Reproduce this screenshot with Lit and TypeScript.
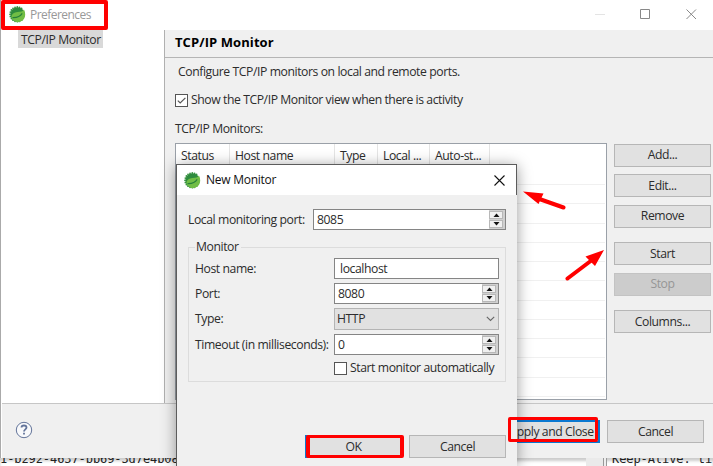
import { LitElement, html, css, svg } from "lit";
import { customElement, property } from "lit/decorators.js";

const baseText = css`
  :host {
    font-family: "Open Sans", "Noto Sans", sans-serif;
    font-size: 12.2px;
    line-height: 18px;
    letter-spacing: -0.42px;
    color: #2c2c2c;
    white-space: nowrap;
  }
  * { box-sizing: border-box; }
`;

@customElement("spring-icon")
class SpringIcon extends LitElement {
  static styles = css`:host { display: block; width: 17px; height: 17px; } svg { display: block; }`;
  render() {
    const teeth = Array.from({ length: 20 }, (_, i) => (i * 18 * Math.PI) / 180);
    return html`<svg width="17" height="17" viewBox="0 0 17 17">
      ${teeth.filter((a) => Math.cos(a) < 0.75).map((a) => svg`<circle cx=${8.3 + 7.3 * Math.cos(a)} cy=${8.3 + 7.3 * Math.sin(a)} r="0.9" fill="#3a9442"/>`)}
      <circle cx="8.5" cy="8.5" r="7.2" fill="#2e8b3d"/>
      <path d="M15 3.4C13.8 5.4 11.6 5.6 8.5 6C4.6 6.5 1.9 8.3 2.6 12C5 15.8 8.3 17 11.5 15.6C16.6 13.4 17.2 8 15 3.4Z" fill="#70bd45"/>
      <path d="M3.5 11.6C7.4 11.8 11.2 10.6 13.2 7.4" fill="none" stroke="#26803a" stroke-width="1.1"/>
    </svg>`;
  }
}

@customElement("push-button")
class PushButton extends LitElement {
  @property() label = "";
  static styles = [baseText, css`
    :host { display: flex; align-items: center; justify-content: center; box-sizing: border-box;
      width: 97px; height: 23px; border: 1px solid #b6b6b6; background: #e1e1e1; }
    :host([disabled]) { background: #ccc; border-color: #c3c3c3; color: #969696; }
    :host([primary]) { border: 2px solid #0b78d1; }
  `];
  render() { return html`<span>${this.label}</span>`; }
}

@customElement("check-box")
class CheckBox extends LitElement {
  @property({ type: Boolean }) checked = false;
  @property() label = "";
  static styles = [baseText, css`
    :host { display: flex; align-items: center; gap: 3px; height: 18px; }
    .box { width: 13px; height: 13px; border: 1px solid #555; background: #fff; }
    svg { display: block; }
  `];
  render() {
    return html`<span class="box"><svg width="11" height="11" viewBox="0 0 11 11">
      ${this.checked ? svg`<path d="M1.8 5.6L4.2 8L9.4 2.8" fill="none" stroke="#555" stroke-width="1.2"/>` : ""}
    </svg></span><span>${this.label}</span>`;
  }
}

@customElement("spin-field")
class SpinField extends LitElement {
  @property() value = "";
  static styles = [baseText, css`
    :host { display: flex; justify-content: space-between; box-sizing: border-box; height: 21px;
      border: 1px solid #858585; background: #fff; padding-left: 3px; }
    .value { line-height: 20px; }
    .arrows { display: flex; flex-direction: column; width: 16px; background: #d0d0d0; padding: 1px 1px 0 0; gap: 1px; }
    .arrow { display: flex; align-items: center; justify-content: center; width: 14px; height: 8px; border: 1px solid #b8b8b8; background: #f0f0f0; }
    svg { display: block; }
  `];
  render() {
    return html`<span class="value">${this.value}</span><span class="arrows">
      <span class="arrow"><svg width="7" height="4" viewBox="0 0 7 4"><path d="M0.5 4L3.5 0.5L6.5 4Z" fill="#111"/></svg></span>
      <span class="arrow"><svg width="7" height="4" viewBox="0 0 7 4"><path d="M0.5 0L3.5 3.5L6.5 0Z" fill="#111"/></svg></span>
    </span>`;
  }
}

@customElement("monitor-dialog")
class MonitorDialog extends LitElement {
  static styles = [baseText, css`
    :host { display: flex; flex-direction: column; width: 341px; height: 302px; }
    .titlebar { display: flex; align-items: center; height: 31px; width: 341px; flex: none; background: #fff;
      border: 1px solid #5c5c5c; border-bottom: 0; padding: 0 11px 0 7px; }
    .title { font-size: 12px; color: #111; margin-left: 5px; flex: 1; letter-spacing: -0.25px; }
    .content { flex: 1; background: #f0f0f0; border-left: 1px solid #5c5c5c; padding: 14px 11px 0 11px; display: flex; flex-direction: column; }
    .row { display: flex; align-items: center; justify-content: space-between; height: 21px; line-height: 21px; flex: none; }
    .port { width: 193px; }
    fieldset { margin: 8px 0 0; border: 1px solid #dcdcdc; padding: 0 5px 0 6px; min-width: 0; height: 144px; flex: none; }
    legend { padding: 0 2px 0 1px; height: 18px; }
    .grid { display: grid; grid-template-columns: 139px 165px; grid-template-rows: 21px 21px 22px 21px 18px; row-gap: 4px; padding-top: 2px; align-items: center; line-height: 20px; }
    .field { height: 21px; border: 1px solid #858585; background: #fff; padding-left: 5px; line-height: 20px; }
    .select { display: flex; align-items: center; justify-content: space-between; height: 22px; border: 1px solid #b4b4b4; background: #e1e1e1; padding: 0 3px 0 2px; }
    .check { grid-column: 2; }
    .actions { display: flex; justify-content: flex-end; gap: 7px; margin-top: 53px; }
  `];
  render() {
    return html`
      <div class="titlebar"><spring-icon></spring-icon><span class="title">New Monitor</span>
        <svg width="11" height="11" viewBox="0 0 11 11"><path d="M0.5 0.5L10.5 10.5M10.5 0.5L0.5 10.5" stroke="#111" stroke-width="1.1"/></svg>
      </div>
      <div class="content">
        <div class="row"><span>Local monitoring port:</span><spin-field class="port" value="8085"></spin-field></div>
        <fieldset><legend>Monitor</legend>
          <div class="grid">
            <span>Host name:</span><span class="field">localhost</span>
            <span>Port:</span><spin-field value="8080"></spin-field>
            <span>Type:</span><span class="select">HTTP
              <svg width="9" height="6" viewBox="0 0 9 6"><path d="M0.8 0.8L4.5 4.5L8.2 0.8" fill="none" stroke="#666" stroke-width="1.1"/></svg></span>
            <span>Timeout (in milliseconds):</span><spin-field value="0"></spin-field>
            <check-box class="check" label="Start monitor automatically"></check-box>
          </div>
        </fieldset>
        <div class="actions"><push-button primary label="OK"></push-button><push-button label="Cancel"></push-button></div>
      </div>`;
  }
}

@customElement("app-root")
class AppRoot extends LitElement {
  static styles = [baseText, css`
    :host { display: block; position: relative; width: 713px; height: 466px; overflow: hidden; background: #fff; }
    .window { display: flex; flex-direction: column; height: 458px; border-left: 1px solid #aaa; background: #fff; padding-left: 1px; }
    .titlebar { display: flex; align-items: center; height: 29px; padding: 0 16px 0 7px; flex: none; margin-bottom: 1px; }
    .title { flex: 1; margin-left: 4px; font-size: 12px; color: #999; letter-spacing: -0.55px; }
    .body { display: flex; height: 374px; flex: none; border-bottom: 1px solid #c6c6c6; }
    .tree { width: 163px; border-right: 1px solid #b0b0b0; padding-left: 16px; }
    .selected { display: inline-block; width: 85px; height: 18px; background: #d9d9d9; padding-left: 3px; line-height: 19px; }
    .page { flex: 1; background: #f0f0f0; display: flex; flex-direction: column; }
    .heading { height: 28px; border-bottom: 1px solid #b5b5b5; padding: 3px 0 0 10px; font-weight: 700; font-size: 13px; color: #000; letter-spacing: 0.08px; }
    .desc { margin: 5px 0 0 13px; }
    .show { margin: 10px 0 0 10px; }
    .caption { margin: 11px 0 0 10px; }
    .main { display: flex; gap: 7px; margin: 5px 0 0 10px; }
    .table { width: 432px; height: 257px; border: 1px solid #9aa0a8; background: #fff; }
    .head { display: grid; grid-template-columns: 54px 105px 43px 52px 60px; height: 24px; line-height: 24px; }
    .col { border-right: 1px solid #e5e5e5; padding-left: 5px; }
    .line { height: 19.25px; border-bottom: 1px solid #f0f0f0; margin-right: 1px; }
    .line.first { height: 17px; }
    .buttons { display: flex; flex-direction: column; gap: 7.5px; padding-top: 0.5px; }
    .gap { margin-top: 7px; }
    .footer { flex: 1; background: #f0f0f0; display: flex; justify-content: space-between; padding: 16px 9px 0 13px; }
    .help { margin-top: 1px; }
    .actions { display: flex; gap: 7px; }
    .apply { width: 97px; }
    .console { display: grid; grid-template-columns: 586px 17px 4px 1fr; height: 8px; overflow: hidden;
      font-family: "DejaVu Sans Mono", monospace; font-size: 12px; letter-spacing: -0.08px; line-height: 14px; color: #222; box-shadow: inset 0 3px 3px #ccc; }
    .console span { margin-top: -6px; height: 14px; }
    .bar { background: #eaeaea; }
    .sash { border: 1px solid #999; border-width: 0 1px; background: #eee; }
    .keep { padding-left: 5px; }
    .dialog { position: absolute; left: 176px; top: 164px; box-shadow: 0 2px 14px rgba(0,0,0,0.4); }
    .mark { position: absolute; border: 4px solid #f00; border-radius: 2px; }
    .m1 { left: 1px; top: 0; width: 107px; height: 30px; }
    .m2 { left: 306px; top: 435px; width: 98px; height: 23px; border-width: 3px 4px; }
    .m3 { left: 508px; top: 417px; width: 90px; height: 25px; border-width: 3.5px; }
    .arrows { position: absolute; left: 515px; top: 180px; }
  `];
  render() {
    return html`
      <div class="window">
        <div class="titlebar"><spring-icon></spring-icon><span class="title">Preferences</span>
          <svg width="102" height="11" viewBox="0 0 102 11" fill="none" stroke="#888">
            <path d="M0 5.5H10" stroke="#e4e4e4"/><path d="M45.5 0.5H54.5V9.5H45.5Z"/><path d="M91.5 0.5L101 10M101 0.5L91.5 10"/>
          </svg>
        </div>
        <div class="body">
          <div class="tree"><span class="selected">TCP/IP Monitor</span></div>
          <div class="page">
            <div class="heading">TCP/IP Monitor</div>
            <div class="desc">Configure TCP/IP monitors on local and remote ports.</div>
            <check-box class="show" checked label="Show the TCP/IP Monitor view when there is activity"></check-box>
            <div class="caption">TCP/IP Monitors:</div>
            <div class="main">
              <div class="table">
                <div class="head">${["Status", "Host name", "Type", "Local ...", "Auto-st..."].map((c) => html`<span class="col">${c}</span>`)}</div>
                <div class="line first"></div>
                ${Array.from({ length: 11 }, () => html`<div class="line"></div>`)}
              </div>
              <div class="buttons">
                <push-button label="Add..."></push-button><push-button label="Edit..."></push-button><push-button label="Remove"></push-button>
                <push-button class="gap" label="Start"></push-button><push-button disabled label="Stop"></push-button>
                <push-button class="gap" label="Columns..."></push-button>
              </div>
            </div>
          </div>
        </div>
        <div class="footer">
          <svg class="help" width="18" height="18" viewBox="0 0 18 18" fill="none" stroke="#63749a">
            <circle cx="9" cy="9" r="7.7" fill="#f8f9fb"/><path d="M6.5 6.6C6.5 3.8 11.5 3.8 11.5 6.6C11.5 8.4 9 8.4 9 10.6M9 11.8V13.6" stroke-width="1.8"/>
          </svg>
          <div class="actions"><push-button class="apply" primary label="Apply and Close"></push-button><push-button label="Cancel"></push-button></div>
        </div>
      </div>
      <div class="console"><span>1-b292-4637-bb69-3d7e4b08</span><i class="bar"></i><i class="sash"></i><span class="keep">Keep-Alive: ti</span></div>
      <monitor-dialog class="dialog"></monitor-dialog>
      <div class="mark m1"></div><div class="mark m2"></div><div class="mark m3"></div>
      <svg class="arrows" width="95" height="105" viewBox="515 180 95 105" fill="#f00" stroke="#f00" stroke-linecap="round">
        <path d="M563.5 207.5L538 198.5M567.5 278.5L592 260" stroke-width="4"/>
        <path d="M523 191.5L543.5 193.5L538.5 204ZM604 250L595 266L585.5 256.5Z" stroke="none"/>
      </svg>`;
  }
}
